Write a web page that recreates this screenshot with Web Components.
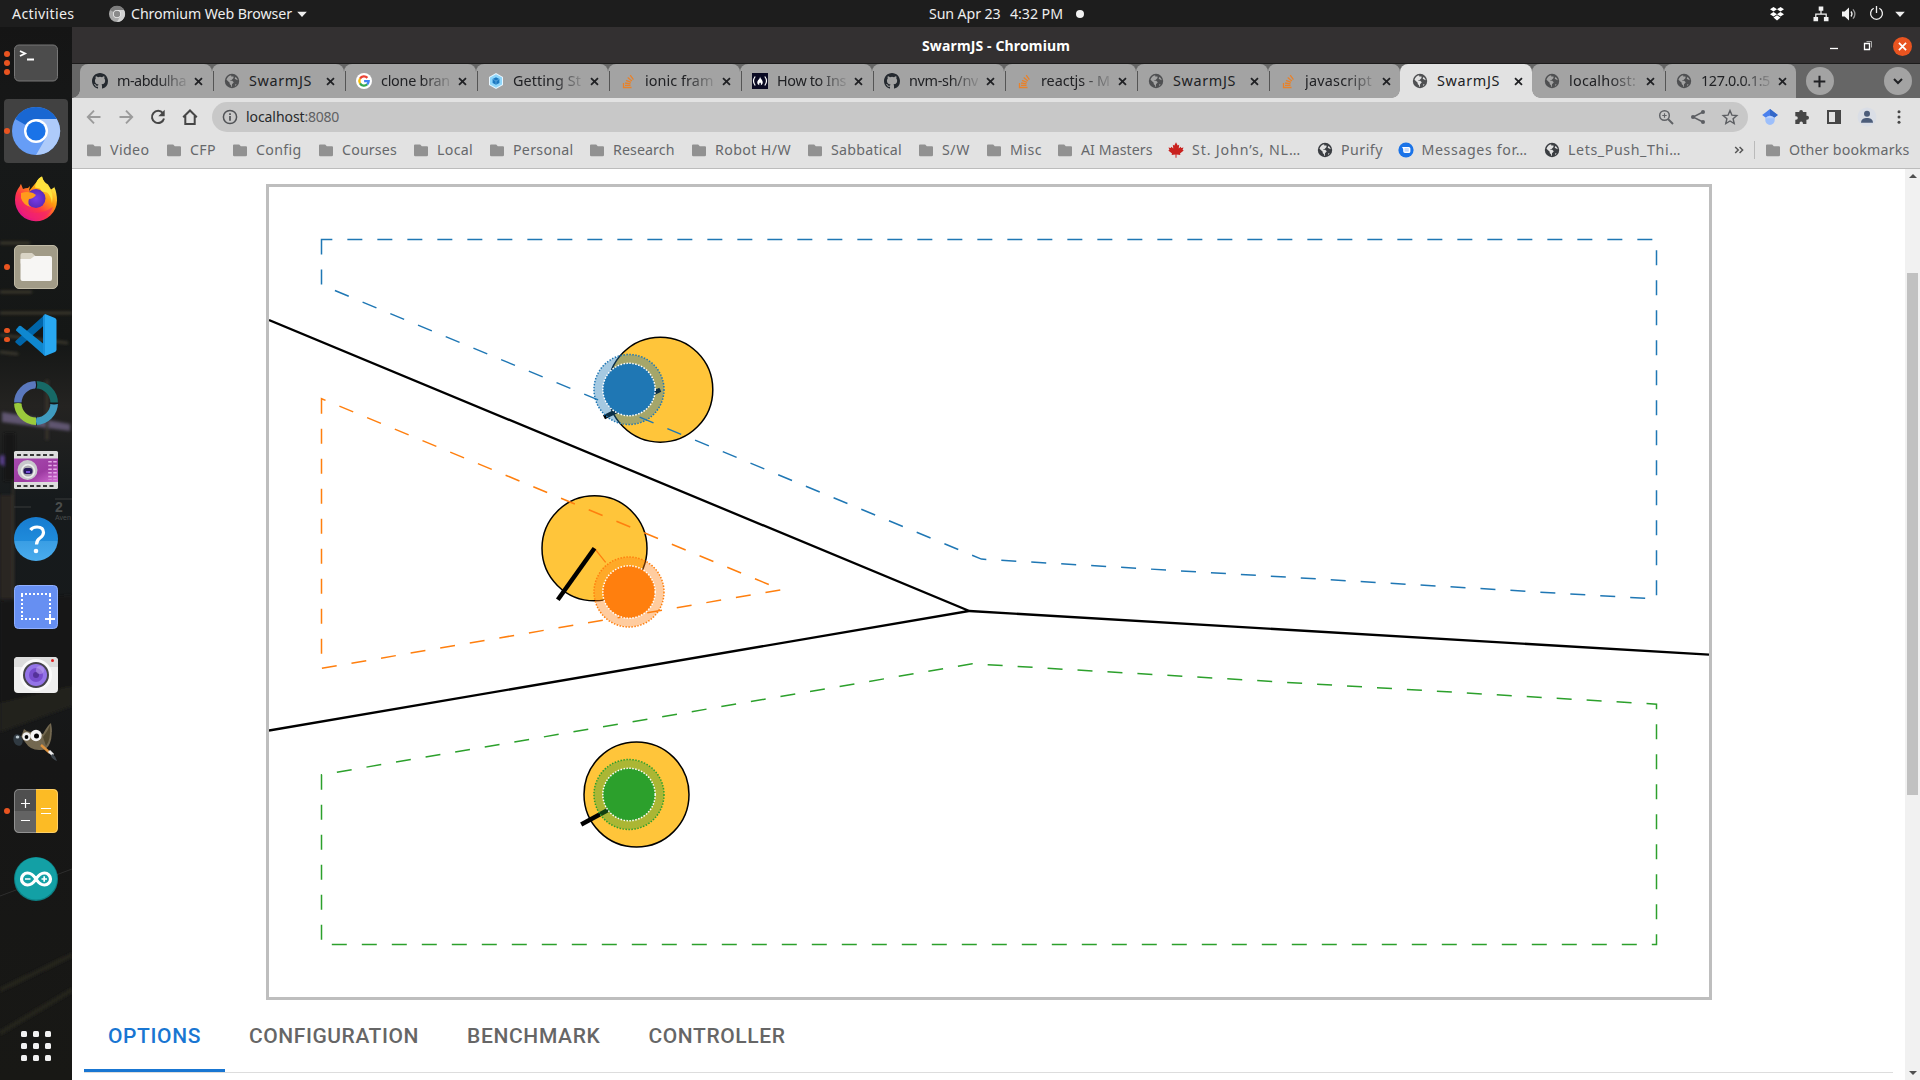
<!DOCTYPE html>
<html lang="en">
<head>
<meta charset="utf-8">
<title>SwarmJS - Chromium</title>
<style>
html,body{margin:0;height:100%;overflow:hidden;background:#161616}
body{font-family:"Noto Sans","Open Sans",sans-serif}
</style>
</head>
<body>
<desk-top></desk-top>
<script>
const define = (name, css, html, init) => {
  const t = document.createElement('template');
  t.innerHTML = `<style>*{box-sizing:border-box}${css}</style>${html}`;
  customElements.define(name, class extends HTMLElement {
    connectedCallback() {
      if (this.shadowRoot) return;
      const r = this.attachShadow({ mode: 'open' });
      r.append(document.importNode(t.content, true));
      if (init) init.call(this, r);
    }
  });
};

const globe = c => `<circle cx="8" cy="8" r="7.2" fill="${c}"/><path d="M7.2 2.2C5 2.6 3 4.500 2.500 6.700l3.200 3.100v1.100l1.500 1.500v1.400h.8v-2.600l1.800-1.900-1.600-1.500H6V7.400l1.600-.3 1.900-2V3.600H7.200zM11.400 4l-.7 1.700 2.900 1.600v-.5C13.200 5.500 12.500 4.600 11.400 4zM11 11.500l1.700-.3-1.500 1.700z" fill="var(--hole,#a3a3a3)"/>`;
const stack = `<path d="M3.500 10v4.500h8M5 12.300h5.500M5.100 10l5.400.9M6 7.300l5 2.100M7.700 4.600l4.200 3.500M10.200 2.200l3.200 4.500" fill="none" stroke="#e8822b" stroke-width="1.300"/>`;
const github = `<path fill="#24292f" d="M8 0C3.580 0 0 3.580 0 8c0 3.540 2.290 6.530 5.470 7.590.4.070.55-.17.55-.38v-1.490c-2.010.37-2.530-.49-2.690-.94-.09-.23-.48-.94-.82-1.130-.28-.15-.68-.52-.01-.53.63-.01 1.080.58 1.230.82.720 1.210 1.870.87 2.330.66.070-.52.28-.87.51-1.070-1.780-.2-3.640-.89-3.640-3.950 0-.87.31-1.590.82-2.150-.08-.2-.36-1.020.08-2.120 0 0 .67-.21 2.200.82a7.400 7.400 0 0 1 4 0c1.530-1.040 2.200-.82 2.200-.82.44 1.100.16 1.920.08 2.120.51.56.82 1.270.82 2.150 0 3.070-1.870 3.750-3.650 3.950.29.25.54.73.54 1.480v2.200c0 .21.15.46.55.38A8 8 0 0 0 16 8c0-4.420-3.580-8-8-8z"/>`;

const ICONS = {
  globe: globe('#4f5052'), globeDark: globe('#3b3e42'), stack, github,
  google: `<circle cx="8" cy="8" r="8" fill="#fff"/><g fill="none" stroke-width="2.300"><path d="M11.400 4.900A4.700 4.700 0 0 0 4 5.600" stroke="#ea4335"/><path d="M4 5.600a4.700 4.700 0 0 0 0 4.800" stroke="#fbbc05"/><path d="M4 10.400a4.700 4.700 0 0 0 7.300.9" stroke="#34a853"/><path d="M11.300 11.300A4.500 4.500 0 0 0 12.700 8.100H8.100" stroke="#4285f4"/></g>`,
  webpack: `<path d="M8 0l7 4v8l-7 4-7-4V4z" fill="#e8f6ff"/><path d="M8 1.200l6 3.400v6.800l-6 3.400-6-3.400V4.600z" fill="#8ed6fb"/><path d="M8 4.200l3.400 1.900v3.800L8 11.800 4.600 9.900V6.100z" fill="#1c78c0"/><path d="M4.600 6.100L8 8l3.400-1.900M8 8v3.800" stroke="#75b8e8" stroke-width=".6" fill="none"/>`,
  fcc: `<rect width="16" height="16" fill="#0a0a23"/><g fill="none" stroke="#fff" stroke-width="1.200"><path d="M3.200 3.500Q-.2 8 3.200 12.500M12.800 3.500q3.400 4.500 0 9"/></g><path d="M8 3.500c.4 2.500 3 3.500 2.700 6.200-.2 1.600-1.200 2.300-2.100 2.500.9-1.200.2-2.200-.5-2.800-.8.700-1.300 1.600-.6 2.800-1.400-.4-2.400-1.400-2.200-3C5.500 7 8.200 6 8 3.500z" fill="#fff"/>`,
  folder: `<path d="M2 2.500h5.200l1.600 1.800H14a1 1 0 0 1 1 1V13a1.300 1.300 0 0 1-1.300 1.300H2.300A1.300 1.300 0 0 1 1 13V3.500a1 1 0 0 1 1-1z" fill="#919191"/>`,
  maple: `<path d="M8 .2l1.700 3.300 1.500-.7-.5 3.600 2-1.700.5 1.200 2.300-.3-.9 2.200 1.100.8-3.700 3 .4 1.300-3.900-.5V15.800h-1V12.400l-3.900.5.400-1.300-3.700-3 1.100-.8-.9-2.200 2.300.3.500-1.200 2 1.700-.5-3.600 1.500.7z" fill="#c9211e"/>`,
  messages: `<circle cx="8" cy="8" r="7.600" fill="#1a73e8"/><path d="M4 5h6.800a1.600 1.600 0 0 1 1.600 1.600v2.900a1.600 1.600 0 0 1-1.600 1.600H7A1.800 1.800 0 0 1 5.200 9.300V6.900z" fill="#fff"/><path d="M6.500 7h4.300M6.500 8.900h4.300" stroke="#8ab4f8" stroke-width=".9"/>`,
  close: `<path d="M4.300 4.300l7.400 7.400M11.700 4.300l-7.400 7.400" stroke="#202124" stroke-width="1.900"/>`,
  back: `<path d="M14.500 8H2M8 1.700L1.800 8 8 14.300" fill="none" stroke="#9b9b9b" stroke-width="1.900"/>`,
  forward: `<path d="M1.500 8H14M8 1.700L14.200 8 8 14.300" fill="none" stroke="#9b9b9b" stroke-width="1.900"/>`,
  reload: `<path d="M12.900 4.200A6.100 6.100 0 1 0 14 9.500" fill="none" stroke="#464646" stroke-width="2"/><path d="M14.700.8v6.400H8.300z" fill="#464646"/>`,
  home: `<path d="M1.200 8.200L8 1.500l6.800 6.700M3.300 7v8h9.400V7" fill="none" stroke="#464646" stroke-width="2"/>`,
  info: `<circle cx="8" cy="8" r="6.600" fill="none" stroke="#505256" stroke-width="1.500"/><path d="M8 7v4.700M8 4.300V6" stroke="#505256" stroke-width="1.700"/>`,
  zoom: `<circle cx="6.500" cy="6.500" r="4.800" fill="none" stroke="#606266" stroke-width="1.500"/><path d="M10 10l5 5" stroke="#606266" stroke-width="2"/><path d="M6.500 4.300v4.400M4.300 6.500h4.400" stroke="#606266" stroke-width="1.100"/>`,
  share: `<path d="M13 3L3 8l10 5" fill="none" stroke="#5c5e62" stroke-width="1.400"/><g fill="#5c5e62"><circle cx="13" cy="3" r="2"/><circle cx="3" cy="8" r="2"/><circle cx="13" cy="13" r="2"/></g>`,
  star: `<path d="M8 1.600l1.900 4.500 4.900.4-3.700 3.200 1.100 4.800L8 12l-4.200 2.500 1.100-4.800L1.200 6.500l4.900-.4z" fill="none" stroke="#5c5e62" stroke-width="1.400"/>`,
  scholar: `<path d="M8 0l7.800 6L8 12 .2 6z" fill="#4a80ed"/><path d="M8 0l7.800 6L8 12z" fill="#3367c8"/><path d="M3.300 8.500h9.400v2.800a4.700 4.700 0 0 1-9.400 0z" fill="#9dbffb"/><path d="M3.500 9.300A4.700 4.700 0 0 1 8 6.800a4.700 4.700 0 0 1 4.500 2.500z" fill="#b9d1fc"/>`,
  puzzle: `<path d="M5.200 3a1.900 1.900 0 0 1 3.800 0h3.400v3.800h.6a2 2 0 0 1 0 4h-.6V15H8.900v-.7a1.700 1.700 0 0 0-3.400 0v.7H1.300v-4.200H2a1.800 1.800 0 0 0 0-3.600h-.7V3z" fill="#464646"/>`,
  panel: `<path d="M1 1h14v14H1zM3 3v10h6V3z" fill="#464646" fill-rule="evenodd"/>`,
  avatar: `<circle cx="8" cy="8" r="9.500" fill="#dadee6"/><circle cx="8" cy="4.700" r="3" fill="#4c5d7a"/><path d="M2 13.800c0-3.700 2.900-4.900 6-4.900s6 1.200 6 4.900z" fill="#4c5d7a"/>`,
  dots: `<g fill="#464646"><circle cx="8" cy="2.800" r="1.500"/><circle cx="8" cy="8" r="1.500"/><circle cx="8" cy="13.200" r="1.500"/></g>`,
  plus: `<path d="M8 1.800v12.400M1.800 8h12.400" stroke="#202124" stroke-width="2.200"/>`,
  chevron: `<path d="M4 6l4 4 4-4" fill="none" stroke="#202124" stroke-width="2"/>`,
  chromeGrey: `<circle cx="8" cy="8" r="8" fill="#a9a9a9"/><path d="M8 8L1 4a8 8 0 0 1 14 0H8z" fill="#7d7d7d"/><path d="M8 4h7a8 8 0 0 1-7 12l3.500-6z" fill="#d2d2d2"/><circle cx="8" cy="8" r="4" fill="#eee"/><circle cx="8" cy="8" r="3.200" fill="#8a8a8a"/>`,
  tri: `<path d="M2.500 5.300h11L8 11.300z" fill="#eee"/>`,
  dropbox: `<path d="M4.500 1L8 3.300 4.500 5.600 1 3.300zM11.500 1L15 3.300l-3.500 2.300L8 3.300zM4.500 5.900L8 8.200l-3.500 2.300L1 8.200zM11.500 5.900L15 8.200l-3.500 2.300L8 8.200zM8 9.300l3.500 2.300L8 14.500l-3.500-2.900z" fill="#fff"/>`,
  network: `<path d="M5.700.5h4.600v4.300H5.700zM.5 11h4.600v4.300H.5zM10.900 11h4.600v4.300h-4.600z" fill="#f2f2f2"/><path d="M8 4v4M2.800 11V8.200h10.400V11" fill="none" stroke="#f2f2f2" stroke-width="1.200"/>`,
  volume: `<path d="M1 5.500h2.700L8 1.500v13l-4.300-4H1z" fill="#f2f2f2"/><path d="M10 5.500q2 2.500 0 5" fill="none" stroke="#f2f2f2" stroke-width="1.300"/><path d="M12 3.300q3.800 4.700 0 9.400" fill="none" stroke="#999" stroke-width="1.300"/>`,
  power: `<path d="M5 2.400a6.300 6.300 0 1 0 6 0M8 0v7.500" fill="none" stroke="#f2f2f2" stroke-width="1.400"/>`,
  min: `<path d="M4 10.500h8" stroke="#fff" stroke-width="1.300"/>`,
  restore: `<path d="M4.500 5.500h5v6h-5z" fill="none" stroke="#fff" stroke-width="1.300"/><path d="M6.500 3.500h5v6" fill="none" stroke="#aaa" stroke-width="1"/>`,
  winClose: `<circle cx="8" cy="8" r="8" fill="#e95420"/><path d="M5 5l6 6M11 5l-6 6" stroke="#fff" stroke-width="1.500"/>`,
  more: `<path d="M2.500 4.500L6 8l-3.500 3.500M7.500 4.500L11 8l-3.500 3.500" fill="none" stroke="#555" stroke-width="1.700"/>`
};

define('ui-icon', `:host{display:block;flex:none;width:var(--s,16px);height:var(--s,16px)}svg{display:block;width:100%;height:100%;overflow:visible}`,
  `<svg viewBox="0 0 16 16"></svg>`, function (r) { r.querySelector('svg').innerHTML = ICONS[this.getAttribute('name')]; });

/* A label whose tracking adapts so that its text spans the requested width. */
define('fit-text', `:host{display:block;flex:none;white-space:pre}span{display:inline-block}`, `<span></span>`, function (r) {
  const s = r.querySelector('span'), w = +this.getAttribute('w');
  s.textContent = this.getAttribute('text');
  const n = s.getBoundingClientRect().width;
  if (w && n) { s.style.letterSpacing = ((w - n) / s.textContent.length) + 'px'; this.style.width = w + 'px'; }
});

define('top-bar', `:host{display:flex;align-items:center;justify-content:space-between;height:27px;background:#1d1d1d;color:#eee;font-size:14.200px;line-height:26px}
 div{display:flex;align-items:center;flex:1 1 0}.c{flex:none}.r{justify-content:flex-end}i{width:8px;height:8px;border-radius:4px;background:#f2f2f2}`,
 `<div><fit-text style="margin-left:12px" text="Activities" w="62.500"></fit-text><ui-icon name="chromeGrey" style="margin:0 6px 0 34.500px"></ui-icon><fit-text text="Chromium Web Browser" w="161"></fit-text><ui-icon name="tri" style="--s:14px;margin-left:3px"></ui-icon></div>
 <div class="c" style="padding-left:93px"><fit-text text="Sun Apr 23" w="71.500"></fit-text><fit-text style="margin-left:9.500px" text="4:32 PM" w="53"></fit-text><i style="margin:0 0 0 13px"></i></div>
 <div class="r"><ui-icon name="dropbox" style="margin-right:28.500px"></ui-icon><ui-icon name="network" style="margin-right:12px"></ui-icon><ui-icon name="volume" style="margin-right:12px"></ui-icon><ui-icon name="power" style="margin-right:9px;--s:15px"></ui-icon><ui-icon name="tri" style="--s:14px;margin-right:13px"></ui-icon></div>`);

const DOCK = [
 [3, `<rect x=".5" y="4" width="43" height="36" rx="4.500" fill="#4c4c4c" stroke="#777"/><path d="M6 10l5 2.500L6 15M13 18.500h7" fill="none" stroke="#fff" stroke-width="1.900"/>`],
 [1, `<circle cx="22" cy="22" r="24" fill="#669df6"/><path d="M22 22L1.200 10A24 24 0 0 1 42.800 10z" fill="#1967d2"/><path d="M22 10h20.800A24 24 0 0 1 22 46l10.400-18z" fill="#aecbfa"/><circle cx="22" cy="22" r="12" fill="#fff"/><circle cx="22" cy="22" r="9.600" fill="#1a73e8"/>`],
 [0, `<defs><linearGradient id="a" x1=".8" y1=".1" x2=".2" y2=".9"><stop stop-color="#fff44f"/><stop offset=".35" stop-color="#ff980e"/><stop offset=".65" stop-color="#ff3647"/><stop offset="1" stop-color="#e31587"/></linearGradient><radialGradient id="p"><stop stop-color="#7a3bea"/><stop offset="1" stop-color="#5b2bb8"/></radialGradient></defs><g transform="translate(0 -1)"><path d="M22.500 6Q24 2 28 .5q1 5 6 8l3 5 3-2 0-1q3 6 3 14A21 21 0 0 1 1 24Q1 16 6 10q0-1 1-2l2 5q2-1 5-1l2-2-1 5z" fill="url(#a)"/><circle cx="22" cy="22.500" r="9.500" fill="url(#p)"/><path d="M7 17q6-2 12 0l3 2q-3 4-7 4-2 5 2 8-8-2-10-9z" fill="#ff9b1c"/><path d="M28 .5q1 6 7 11 5 5 3 16-1-8-5-11l-5-1-2-3-5-1q1-8 7-11z" fill="#ffe33d"/><path d="M5 31q15 12 34 0-5 12-17 12T5 31z" fill="#f22172" opacity=".55"/></g>`],
 [1, `<rect x=".5" y=".5" width="43" height="43" rx="4.500" fill="#a19b87" stroke="#c0baa6"/><path d="M6.500 12V10q0-2 2-2H18l4 3.500h14v7h-29.500z" fill="#d9d4c5"/><path d="M6.500 14h10l4-3H36q2 0 2 2v21q0 2-2 2H8.500q-2 0-2-2z" fill="#f7f6f4"/>`],
 [2, `<path d="M2 27.500L31 1.500v10L7 32.500q-1 .7-2 0l-3.500-3q-.8-1 .5-2z" fill="#0065a9"/><path d="M2 16.500l3-3.500q1-.7 2 0l24 19v11L2 17.500z" fill="#0f88d0"/><path d="M31 1l10 4q1.500.8 1.500 2.500v29q0 1.700-1.500 2.500l-10 4z" fill="#28a8f2"/><path d="M31 1l-2 2v38l2 2z" fill="#1890dd"/>`],
 [0, `<g fill="none" stroke-width="7.500"><path d="M3.800 22A18.200 18.200 0 0 1 22 3.800" stroke="#5a78bd"/><path d="M22 3.800A18.200 18.200 0 0 1 40.200 22" stroke="#176966"/><path d="M40.200 22A18.200 18.200 0 0 1 22 40.200" stroke="#3f9bbf"/><path d="M22 40.200A18.200 18.200 0 0 1 3.800 22" stroke="#9aca3c"/></g><g fill="#151819"><path d="M21-1h1.200q2 5 0 9.500H21q2-4.500 0-9.500zM35.500 21.500h9v1.200q-4.500 1.500-9 0zM22 35.500h1q-2 4.500 0 9h-1zM-.5 21.500h9v1.200q-4.500-1.500-9 0z"/></g>`],
 [0, `<defs><linearGradient id="f" x2="1" y2="1"><stop stop-color="#a74baf"/><stop offset=".6" stop-color="#9d3ba2"/><stop offset="1" stop-color="#d56fd5"/></linearGradient></defs><g transform="translate(0 -1)"><rect y="3" width="44" height="38" rx="1.500" fill="#ddd"/><path d="M3 7h39M3 38h39" stroke="#383838" stroke-width="2.200" stroke-dasharray="4 2.500"/><rect y="10.500" width="44" height="23.500" fill="url(#f)"/><circle cx="13.500" cy="22" r="10" fill="#c8c8cc"/><circle cx="14" cy="23" r="7.200" fill="#eee"/><circle cx="14" cy="23" r="5.500" fill="#aaaab0"/><rect x="9.500" y="20" width="9" height="6" rx="2.500" fill="#261759"/><path d="M12 24h4" stroke="#7652d8" stroke-width="2"/><path d="M36 13v19M41 13v19" stroke="#e5a9e8" stroke-width="3.500" stroke-dasharray="1.500 2.200"/></g>`],
 [0, `<defs><linearGradient id="h" x2="0" y2="1"><stop stop-color="#177cd0"/><stop offset=".54" stop-color="#1f8bdb"/><stop offset=".55" stop-color="#3a9ee4"/><stop offset="1" stop-color="#4aaced"/></linearGradient></defs><circle cx="22" cy="22" r="22" fill="url(#h)"/><path d="M16.500 13q2-3 6.500-3 6.500 0 6.500 5.500 0 3-3.500 5.500-3.500 2.300-3.500 6.500" fill="none" stroke="#fff" stroke-width="3.200"/><circle cx="22" cy="34" r="2.300" fill="#fff"/>`],
 [0, `<rect x=".5" y=".5" width="43" height="43" rx="4" fill="#668ff2" stroke="#90afff"/><path d="M7 9h30M8 10v24M7 34h20M36 10v18" stroke="#fff" stroke-width="2" stroke-dasharray="2 2" fill="none"/><path d="M36 29v10M31 34h10" stroke="#fff" stroke-width="2"/>`],
 [0, `<rect x="0" y="4" width="44" height="36" rx="4" fill="#efefef"/><path d="M0 14V8q0-4 4-4h36q4 0 4 4v6z" fill="#dcdcdc"/><circle cx="22" cy="22" r="16" fill="#fafafa"/><circle cx="22" cy="22" r="13" fill="#45434b"/><circle cx="22" cy="22" r="11" fill="#9474e8"/><circle cx="22" cy="22" r="7" fill="#774dcd"/><circle cx="22" cy="22" r="3" fill="#543299"/><circle cx="26" cy="17" r="4" fill="#c7b0ee" opacity=".45"/><circle cx="38.500" cy="7.500" r="1.500" fill="#e02020"/>`],
 [0, `<path d="M7 16l3-8q4 4 9 3l10 2Q33 5 37 2q2 12-1 20-3 8-11 7-9 0-14-8z" fill="#736850"/><path d="M29 16q5-6 7-12 1 15-4 21z" fill="#50472f"/><ellipse cx="4" cy="19" rx="4.500" ry="6" fill="#303a42" transform="rotate(-20 4 19)"/><ellipse cx="3.500" cy="16" rx="1.800" ry="1.500" fill="#b8c5cc"/><circle cx="12.500" cy="15.500" r="4.200" fill="#eee"/><circle cx="22" cy="14.500" r="5.700" fill="#f4f4f4"/><circle cx="12.500" cy="16" r="1.900"/><circle cx="22.500" cy="15" r="2.500"/><path d="M27 24l9 8" stroke="#de933f" stroke-width="2.500"/><path d="M35 30l4 4" stroke="#eee" stroke-width="3"/><path d="M38 33q3 1 5 7-5-2-6-5z" fill="#404850"/>`],
 [1, `<path d="M22 0H5Q0 0 0 5v17h22z" fill="#4f4f4f"/><path d="M22 22H0v17q0 5 5 5h17z" fill="#636363"/><path d="M22 0h17q5 0 5 5v34q0 5-5 5H22z" fill="#fcbb25"/><rect x=".5" y=".5" width="43" height="43" rx="4.500" fill="none" stroke="#fff" stroke-opacity=".3"/><path d="M7 14.500h9M11.500 10v9M7 31.500h9M27 19.500h10M27 24.500h10" stroke="#fff" stroke-width="1.200"/>`],
 [0, `<circle cx="22" cy="22" r="22" fill="#0c8185"/><circle cx="22" cy="21.500" r="21" fill="#13a0a5"/><path d="M22 22C18.500 16.500 16 16 13.500 16a6 6 0 0 0 0 12C16 28 18.500 27.500 22 22S28 16 30.500 16a6 6 0 0 1 0 12C28 28 25.500 27.500 22 22z" fill="none" stroke="#fff" stroke-width="3.200"/><path d="M11 22h5.500M27.500 22H33M30.200 19.300v5.400" stroke="#fff" stroke-width="1.700"/>`]
];
define('dock-item', `:host{display:grid;grid-template-columns:14px 44px;height:68px;align-items:center;position:relative;width:68px}
 :host([active])::before{content:"";position:absolute;left:4px;top:2px;width:64px;height:64px;border-radius:4px;background:#414141;}
 div{display:flex;flex-direction:column;gap:3.200px;align-items:center;position:relative}i{width:5.600px;height:5.600px;border-radius:3px;background:#e95420}svg{display:block;overflow:visible;position:relative}`,
 `<div></div><svg width="44" height="44" viewBox="0 0 44 44"></svg>`, function (r) {
  const [n, s] = DOCK[this.getAttribute('app')];
  r.querySelector('div').innerHTML = '<i></i>'.repeat(n); r.querySelector('svg').innerHTML = s;
 });

define('side-dock', `:host{display:flex;flex-direction:column;width:72px;flex:none;position:relative;overflow:hidden;background:#151515;padding-top:2px}.bg{position:absolute;left:0;top:0}.g{margin:auto 0 19px 21px;display:grid;grid-template-columns:repeat(3,6px);gap:6px;position:relative}.g i{width:6px;height:6px;border-radius:1.500px;background:#f2f2f2}`,
 `<svg class="bg" width="72" height="1053" viewBox="0 27 72 1053" font-family="Liberation Sans"><defs><linearGradient id="b" x2="0" y2="1"><stop stop-color="#151515"/><stop offset=".12" stop-color="#171919"/><stop offset=".3" stop-color="#151716"/><stop offset=".36" stop-color="#242321"/><stop offset=".45" stop-color="#161a1c"/><stop offset=".6" stop-color="#171a1b"/><stop offset=".7" stop-color="#161616"/><stop offset="1" stop-color="#181815"/></linearGradient><filter id="s"><feGaussianBlur stdDeviation="1.500"/></filter></defs>
 <rect y="27" width="72" height="1053" fill="url(#b)"/><g filter="url(#s)"><path d="M0 243h30M0 292h32M0 313h72M0 335l68 8M0 352l18 2" stroke="#4a4435" stroke-width="2"/><path d="M2 412l68 12v7l-68-9z" fill="#5e5470"/><path d="M0 455l4 1v10l-4-2z" fill="#59408a"/><path d="M4 433h11v48H4z" fill="#131519"/><path d="M47 380v60" stroke="#39352f" stroke-width="3"/><path d="M0 495h12v104H0z" fill="#292520"/><path d="M13 480v119" stroke="#393329" stroke-width="2"/><path d="M0 601l72-6v95L0 708z" fill="#141414"/><path d="M0 703l72-17v20L0 732z" fill="#24221f"/><path d="M0 990l72-35M0 1033l72-43" stroke="#26251f" stroke-width="4"/></g><path d="M0 896l72-27" stroke="#333" stroke-width=".8"/><path d="M55 499h17M14 507h17" stroke="#393b3a"/><path d="M51 724l-5 8h6z" fill="#555"/>
 <g fill="#4a4d4c"><text x="55" y="512" font-size="14" font-weight="bold">2</text><text x="55" y="519.500" font-size="7">Aven</text></g></svg>`
 + DOCK.map((_, i) => `<dock-item app="${i}"${i == 1 ? ' active' : ''}></dock-item>`).join('') + `<div class="g">${'<i></i>'.repeat(9)}</div>`);

define('window-title', `:host{display:grid;grid-template-columns:1fr auto 1fr;align-items:center;height:37px;background:#333031;border-bottom:1px solid #1c1b1b;color:#fff;font:bold 14px/38px "Noto Sans"}div{display:flex;justify-content:flex-end;align-items:center}`,
 `<span></span><fit-text text="SwarmJS - Chromium" w="148"></fit-text><div><ui-icon name="min" style="margin-right:18px"></ui-icon><ui-icon name="restore" style="margin-right:16.500px"></ui-icon><ui-icon name="winClose" style="--s:19px;margin-right:8.500px"></ui-icon></div>`);

define('page-tab', `:host{display:flex;align-items:center;width:132px;height:34px;background:#a3a3a3;border-radius:8px 8px 0 0;padding:0 0 0 12px;position:relative;color:#202124;font-size:14.400px;--hole:#a3a3a3}
 :host::after{content:"";position:absolute;right:-2px;top:7px;height:20px;width:1px;background:#555;z-index:1}
 :host::before{content:"";position:absolute;left:-8px;bottom:0;width:8px;height:8px;background:radial-gradient(circle at 0 0,transparent 7.500px,#a3a3a3 8px)}
 :host(:not([first]):not([on]))::before{display:none}
 :host([on]){background:#e2e2e2;--hole:#e2e2e2}:host([on])::before{background:radial-gradient(circle at 0 0,#a3a3a3 7.500px,#e2e2e2 8px)}
 :host([on])::after{background:radial-gradient(circle at 100% 0,#a3a3a3 7.500px,#e2e2e2 8px);width:8px;height:8px;right:-8px;top:26px}
 :host([quiet])::after{display:none}
 .t{width:69px;margin-left:9px;white-space:nowrap;line-height:32px}.fade{-webkit-mask:linear-gradient(90deg,#000 58%,rgba(0,0,0,.15) 100%)}`,
 `<div class="t"></div><ui-icon name="close" style="--s:15px;margin-left:5px"></ui-icon>`, function (r) {
  const ic = document.createElement('ui-icon'); ic.setAttribute('name', this.getAttribute('icon'));
  const t = r.querySelector('.t'); t.before(ic);
  if (this.getAttribute('label') !== 'SwarmJS') t.classList.add('fade');
  const f = document.createElement('fit-text'); f.setAttribute('text', this.getAttribute('label')); f.setAttribute('w', this.getAttribute('w')); t.append(f);
 });
define('tab-strip', `:host{display:flex;height:34px;background:#666;align-items:center;padding-left:8px}
 .t{display:flex}.b{width:28px;height:28px;border-radius:50%;background:#a3a3a3;display:grid;place-items:center;margin-left:9.500px}.last{margin:0 8px 0 auto}`,
 `<div class="t"></div><div class="b"><ui-icon name="plus" style="--s:15px"></ui-icon></div><div class="b last"><ui-icon name="chevron"></ui-icon></div>`, function (r) {
  const T = [['github','m-abdulha',69],['globe','SwarmJS',63],['google','clone bran',69],['webpack','Getting St',68],['stack','ionic fram',68.5],['fcc','How to Ins',69],['github','nvm-sh/nv',69],['stack','reactjs - M',69],['globe','SwarmJS',63],['stack','javascript',67],['globe','SwarmJS',63],['globe','localhost:',67],['globe','127.0.0.1:5',69]];
  const box = r.querySelector('.t');
  T.forEach(([ic, tx, w], i) => {
    const el = document.createElement('page-tab');
    el.setAttribute('icon', ic); el.setAttribute('label', tx); el.setAttribute('w', w);
    if (i == 10) el.setAttribute('on', ''); if (i == 9 || i == 12) el.setAttribute('quiet', '');
    if (i == 0) el.setAttribute('first', '');
    box.append(el);
  });
 });

define('nav-bar', `:host{display:flex;align-items:center;height:38px;background:#e2e2e2;padding-left:14px}
 .n{display:flex;gap:16px;width:126px}.u{display:flex;align-items:center;width:1536px;height:30px;margin:0;border-radius:15px;background:#c8c8c8;padding:0 10px;font-size:14px;line-height:28px;color:#27282a}
 .u .a{margin-left:auto;display:flex;gap:16px}.e{display:flex;gap:16.200px;margin-left:14px}`,
 `<div class="n"><ui-icon name="back"></ui-icon><ui-icon name="forward"></ui-icon><ui-icon name="reload"></ui-icon><ui-icon name="home"></ui-icon></div>
 <div class="u"><ui-icon name="info"></ui-icon><fit-text style="margin-left:8px;margin-top:-1px" text="localhost" w="58.500"></fit-text><fit-text style="color:#606163;margin-top:-1px" text=":8080" w="34.500"></fit-text><div class="a"><ui-icon name="zoom"></ui-icon><ui-icon name="share"></ui-icon><ui-icon name="star"></ui-icon></div></div>
 <div class="e"><ui-icon name="scholar"></ui-icon><ui-icon name="puzzle"></ui-icon><ui-icon name="panel"></ui-icon><ui-icon name="avatar"></ui-icon><ui-icon name="dots"></ui-icon></div>`);

const MARKS = [['folder','Video',39.5,80],['folder','CFP',26,66],['folder','Config',45.5,86],['folder','Courses',55,95],['folder','Local',36,76],['folder','Personal',60.5,100],['folder','Research',61.5,102],['folder','Robot H/W',76,116],['folder','Sabbatical',71,111],['folder','S/W',28,68],['folder','Misc',32,71],['folder','AI Masters',71.5,111],['maple','St. John’s, NL…',109,149],['globeDark','Purify',42,80.5],['messages','Messages for…',106,146.5],['globeDark','Lets_Push_Thi…',113,190]];
define('bookmark-bar', `:host{display:flex;align-items:center;height:33px;background:#e2e2e2;border-bottom:1px solid #bcbcbc;padding:0 0 5px 14px;color:#66686b;font-size:14.200px;--hole:#e2e2e2}
 .m{display:flex;align-items:center;gap:8px;flex:none}.s{width:1px;height:18px;background:#bababa;margin:0 10px 0 7px}`,
 MARKS.map(m => `<div class="m" style="width:${m[3]}px"><ui-icon name="${m[0]}"></ui-icon><fit-text text="${m[1]}" w="${m[2]}"></fit-text></div>`).join('') +
 `<ui-icon name="more" style="--s:14px;margin-left:-1px"></ui-icon><div class="s"></div><div class="m"><ui-icon name="folder"></ui-icon><fit-text text="Other bookmarks" w="120.500"></fit-text></div>`);

const agent = (c, bx, by, hx, hy, y) => `<circle cx="${bx}" cy="${by}" r="52.500" fill="#ffc53a" stroke="#000" stroke-width="1.500"/><path d="M${bx} ${by}L360 ${y}" stroke="${c}" stroke-width="1.300" stroke-dasharray="18 15"/><path d="M${bx} ${by}L${hx} ${hy}" stroke="#000" stroke-width="4.500"/>`;
const goal = (c, y) => `<circle cx="360" cy="${y}" r="35" fill="${c}" fill-opacity=".4" stroke="${c}" stroke-width="1.500" stroke-dasharray="1.500 1.500"/><circle cx="360" cy="${y}" r="26.200" fill="${c}" stroke="#fff" stroke-width="1.500" stroke-dasharray="1.500 1.500"/>`;
define('swarm-arena', `:host{display:block;width:1446px;height:816px;border:3px solid #bebebe;background:#fff}svg{display:block}`,
 `<svg width="1440" height="810" viewBox="0 0 1440 810">${agent('#1f77b4',391.3,202.7,335,230.3,202.5)}${agent('#ff7f0e',325.5,361.3,288.8,412.7,405)}${agent('#2ca02c',367.5,607.5,312.2,637.5,607.5)}
 <g fill="none" stroke-width="1.500" stroke-dasharray="15 15"><path stroke="#1f77b4" d="M52.500 52.500V98L712.400 372.100 1387.500 412V52.500z"/><path stroke="#ff7f0e" d="M52.500 211.700V481.300L512.500 402.800z"/><path stroke="#2ca02c" d="M52.500 587.800V757.500H1387.500V517.200L703.300 476.800z"/></g>
 <path d="M0 133L700.300 424 0 543.500M700.300 424L1440 467.700" fill="none" stroke="#000" stroke-width="2.300"/>${goal('#1f77b4',202.5)}${goal('#ff7f0e',405)}${goal('#2ca02c',607.5)}</svg>`);

define('option-tabs', `:host{display:flex;width:1809px;height:73px;border-bottom:1px solid #ddd;font:500 21px/72px Roboto,sans-serif;color:#666}
 div{padding:0 24px;height:73px;margin-bottom:-1px}.on{color:#1976d2;border-bottom:3px solid #1976d2;height:72px}`,
 `<div class="on"><fit-text text="OPTIONS" w="93"></fit-text></div><div><fit-text text="CONFIGURATION" w="170"></fit-text></div><div><fit-text text="BENCHMARK" w="133.500"></fit-text></div><div><fit-text text="CONTROLLER" w="137"></fit-text></div>`);

define('scroll-bar', `:host{display:flex;flex-direction:column;width:15px;background:#f1f1f1;align-items:center;justify-content:space-between}
 i{width:0;border:4px solid transparent}.u{border-bottom-color:#505050;border-top-width:0;margin-top:5px}.d{border-top-color:#505050;border-bottom-width:0;margin-bottom:5px}b{width:11px;height:522px;background:#c1c1c1;margin:95px 0 auto}`,
 `<i class="u"></i><b></b><i class="d"></i>`);

define('web-page', `:host{display:flex;flex:1;min-height:0;background:#fff}main{flex:1;display:flex;flex-direction:column}swarm-arena{margin:15px 0 0 194px}option-tabs{margin-left:12px}`,
 `<main><swarm-arena></swarm-arena><option-tabs></option-tabs></main><scroll-bar></scroll-bar>`);

define('desk-top', `:host{display:flex;flex-direction:column;width:1920px;height:1080px;overflow:hidden}.r{display:flex;flex:1;min-height:0}.w{flex:1;display:flex;flex-direction:column;min-width:0}`,
 `<top-bar></top-bar><div class="r"><side-dock></side-dock><div class="w"><window-title></window-title><tab-strip></tab-strip><nav-bar></nav-bar><bookmark-bar></bookmark-bar><web-page></web-page></div></div>`);
</script>
</body>
</html>
